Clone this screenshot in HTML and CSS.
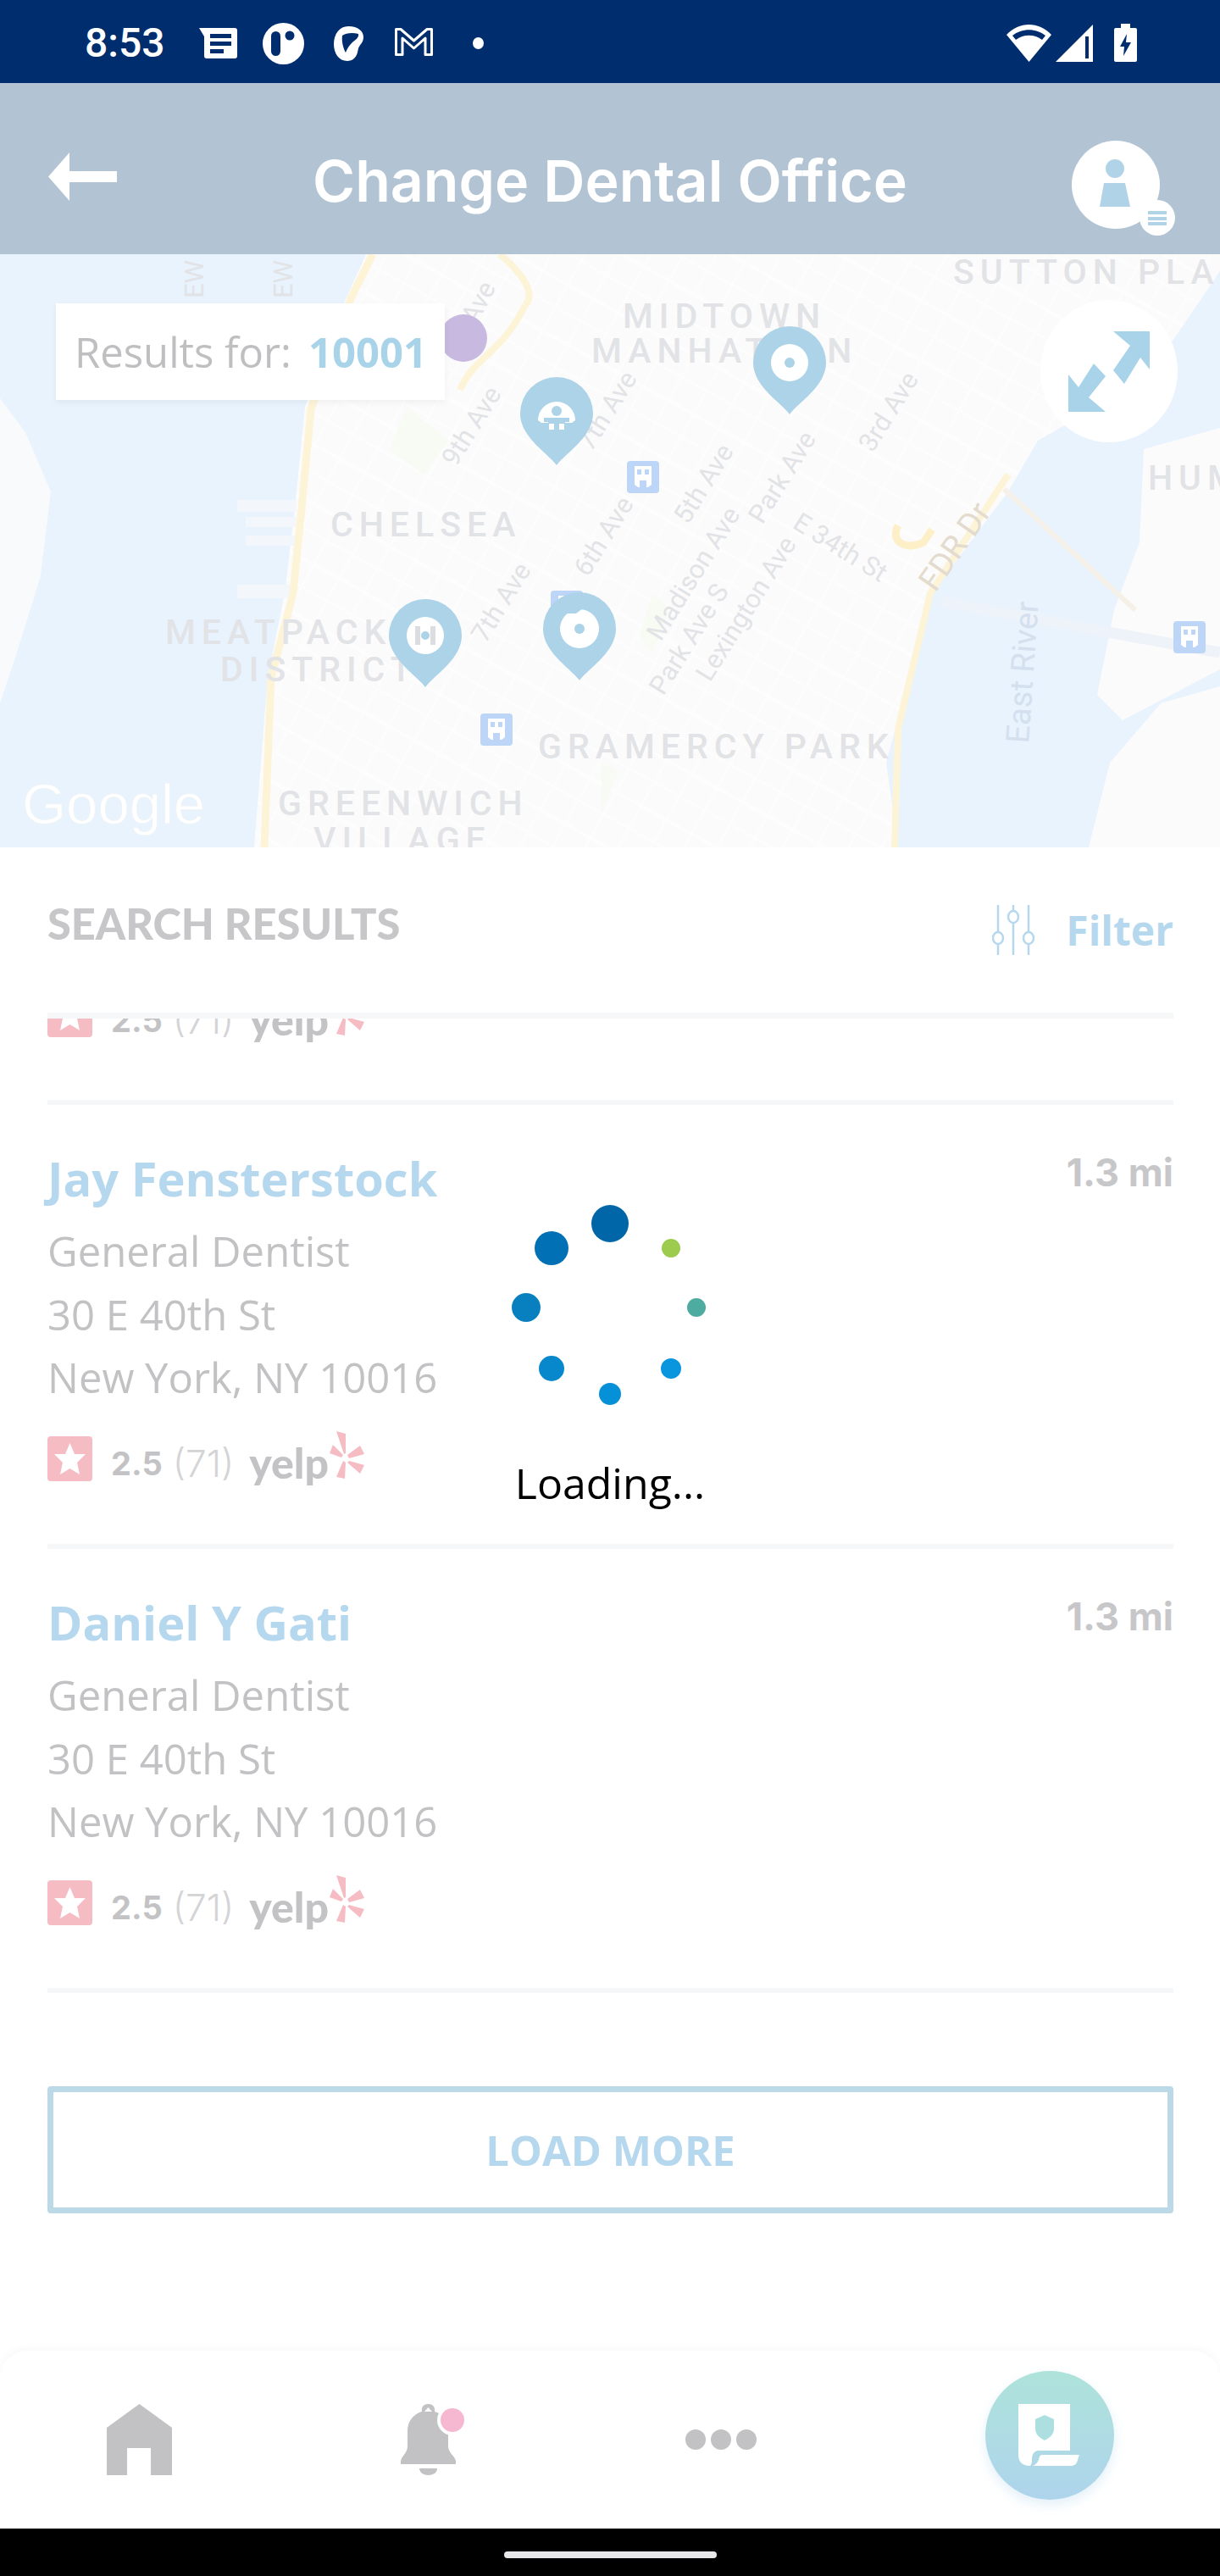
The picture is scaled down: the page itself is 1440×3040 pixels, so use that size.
FILE: index.html
```html
<!DOCTYPE html>
<html lang="en">
<head>
  <meta charset="UTF-8" />
  <meta name="viewport" content="width=device-width, initial-scale=1" />
  <title>Change Dental Office</title>
  <link rel="stylesheet" href="styles.css">
</head>
<body>

<div class="status-bar">
  <span class="clock">8:53</span>
  <svg class="st-msg" viewBox="0 0 45 36"><path fill="#fff" d="M0 0H42a3 3 0 0 1 3 3V33a3 3 0 0 1-3 3H9a3 3 0 0 1-3-3V10Z"/><path fill="#002d6e" d="M13 7H38V12H13ZM13 16H38V21H13ZM13 25H29V30H13Z"/></svg>
  <svg class="st-opal" viewBox="0 0 49 49"><circle cx="24.500" cy="24.500" r="24.500" fill="#fff"/><rect x="10" y="10" width="11" height="29" rx="5.500" fill="#002d6e"/><circle cx="32" cy="15" r="5.500" fill="#002d6e"/></svg>
  <svg class="st-leaf" viewBox="0 0 35 41"><path fill="#fff" d="M17 0C29 0 35 6 35 13C35 19 31 21 29 26C28 32 26 41 16 41C6 41 0 32 0 21C0 9 7 0 17 0Z"/><path fill="#002d6e" d="M10 11C14 8 22 7 29 9C30 14 25 16 21 20C18 23 16 26 14 31C11 26 9 17 10 11Z"/></svg>
  <svg class="st-gmail" viewBox="0 0 45 34"><path fill="none" stroke="#fff" stroke-width="3" stroke-linejoin="round" d="M1.500 2.500H7L22.500 16L38 2.500H43.500V32.500H36V13L22.500 25L9 13V32.500H1.500Z"/></svg>
  <span class="st-dot"></span>
  <span class="st-right">
    <svg class="st-wifi" viewBox="0 0 53 44"><path fill="#fff" d="M0 12C15-4 38-4 53 12L26.500 44Z"/><path fill="#002d6e" d="M7 13C18 4 35 4 46 13L42 18C33 11 20 11 11 18Z"/></svg>
    <svg class="st-signal" viewBox="0 0 44 44"><path fill="#fff" d="M44 0V44H0Z"/><path fill="#002d6e" d="M35 14H39V40H35Z"/></svg>
    <svg class="st-batt" viewBox="0 0 27 45"><path fill="#fff" d="M8 0H19V5H25a2 2 0 0 1 2 2V43a2 2 0 0 1-2 2H2a2 2 0 0 1-2-2V7a2 2 0 0 1 2-2H8Z"/><path fill="#002d6e" d="M15 12L7 27H12L11 38L20 22H14Z"/></svg>
  </span>
</div>

<header class="top-bar">
  <svg class="back" viewBox="0 0 81 57"><path fill="#fff" d="M25 0V22H81V35H25V57L0 28.500Z"/></svg>
  <h1 class="title">Change Dental Office</h1>
  <svg class="avatar" viewBox="0 0 123 112">
    <circle cx="53" cy="52" r="52" fill="#fff"/>
    <circle cx="52" cy="33" r="11" fill="#b1d3e8"/>
    <path fill="#b1d3e8" d="M39 50H64L70 78H34Z"/>
    <circle cx="102" cy="91" r="21" fill="#fff"/>
    <path fill="#b1d3e8" d="M91 83H113V87H91ZM91 90H113V94H91ZM91 96H113V100H91Z"/>
  </svg>
</header>

<section class="map">
  <svg class="map-svg" viewBox="0 300 1440 700">
    <defs>
      <pattern id="grid" width="62" height="34" patternUnits="userSpaceOnUse" patternTransform="rotate(-61)">
        <path d="M0 0H62M0 0V34M31 0V34" stroke="#fff" stroke-width="4" stroke-opacity=".6"/>
      </pattern>
      <path id="manhattan" d="M432 300L405 360L360 480L348 600L336 700L316 800L300 1000H1060L1046 900L1100 700L1190 580L1225 520L1355 445L1440 320V300Z"/>
      <path id="pin" d="M0 61C-10 47-43 28-43 0A43 43 0 0 1 43 0C43 28 10 47 0 61Z" fill="#add3e8"/>
      <g id="subway">
        <rect width="38" height="38" rx="4" fill="#bdd6f8"/>
        <path fill="#fff" d="M9 6H29V28L25 31H13L9 28Z"/>
        <path fill="#bdd6f8" d="M12 10H17V16H12ZM21 10H26V16H21ZM15 23H23V31H15Z"/>
      </g>
    </defs>
    <rect x="0" y="300" width="1440" height="700" fill="#e8f3fd"/>
    <path fill="#f8fafb" d="M0 470L30 510L60 580L48 680L20 770L0 830Z"/>
    <path fill="#fcfbfb" d="M1440 505L1350 530L1345 640L1315 720L1295 820L1325 850L1440 790Z"/>
    <path fill="#fcfbfb" d="M1440 810L1370 830L1310 900L1285 1000H1440Z"/>
    <use href="#manhattan" fill="#fcfbfb"/>
    <use href="#manhattan" fill="url(#grid)"/>
    <path fill="#f3f7fb" d="M280 590H350V604H280ZM290 610H350V622H290ZM290 632H350V644H290ZM280 690H345V706H280Z"/>
    <path fill="#f8fbf4" d="M480 480L530 520L500 560L460 530ZM770 700L790 720L770 770L755 750ZM710 900L730 910L710 960Z"/>
    <path d="M1111 710L1313 747L1440 770" stroke="#edf3f9" stroke-width="13" fill="none"/>
    <path d="M1185 577L1340 720" stroke="#f6f1e8" stroke-width="6" fill="none"/>
    <path d="M440 300L415 350L367 483L356 600L346 700L320 800L312 1000" stroke="#fdf4d8" stroke-width="9" fill="none"/>
    <path d="M620 360C590 420 560 420 543 460M590 300C625 330 630 350 620 360" stroke="#fdf4d8" stroke-width="8" fill="none"/>
    <path d="M1190 560L1098 700L1060 860L1056 1000" stroke="#fdf4d8" stroke-width="8" fill="none"/>
    <path d="M1060 620C1050 640 1070 650 1090 640L1100 625" stroke="#fdf0c8" stroke-width="9" fill="none"/>

    <g class="area">
      <text x="1125" y="335">SUTTON PLA</text>
      <text x="735" y="387">MIDTOWN</text>
      <text x="698" y="428">MANHATTAN</text>
      <text x="390" y="633">CHELSEA</text>
      <text x="195" y="760">MEATPACKING</text>
      <text x="260" y="804">DISTRICT</text>
      <text x="635" y="895">GRAMERCY PARK</text>
      <text x="328" y="962">GREENWICH</text>
      <text x="370" y="1005">VILLAGE</text>
      <text x="1355" y="578">HUM</text>
    </g>
    <g class="street">
      <text transform="translate(240 352) rotate(-90)">EW</text>
      <text transform="translate(345 352) rotate(-90)">EW</text>
      <text transform="translate(562 384) rotate(-62)">Ave</text>
      <text transform="translate(538 552) rotate(-58)">9th Ave</text>
      <text transform="translate(698 534) rotate(-58)">7th Ave</text>
      <text transform="translate(1030 535) rotate(-58)">3rd Ave</text>
      <text transform="translate(573 760) rotate(-58)">7th Ave</text>
      <text transform="translate(694 682) rotate(-58)">6th Ave</text>
      <text transform="translate(812 620) rotate(-58)">5th Ave</text>
      <text transform="translate(900 620) rotate(-58)">Park Ave</text>
      <text transform="translate(780 758) rotate(-58)">Madison Ave</text>
      <text transform="translate(783 822) rotate(-58)">Park Ave S</text>
      <text transform="translate(838 806) rotate(-58)">Lexington Ave</text>
      <text transform="translate(934 622) rotate(32)">E 34th St</text>
      <text class="fdr" transform="translate(1104 700) rotate(-55)">FDR Dr</text>
      <text class="river" transform="translate(1214 878) rotate(-86)">East River</text>
    </g>
    <text class="google" x="26" y="972">Google</text>

    <use href="#subway" x="740" y="544"/>
    <use href="#subway" x="567" y="842"/>
    <use href="#subway" x="1385" y="733"/>
    <use href="#subway" x="650" y="697"/>

    <circle cx="547" cy="399" r="28" fill="#c8b9e1"/>

    <g transform="translate(657 488)">
      <use href="#pin"/>
      <path fill="#fff" d="M-22 8A22 22 0 1 1 22 8L18 11H-18Z"/>
      <circle cx="0" cy="-3" r="6" fill="#add3e8"/>
      <path fill="#add3e8" d="M-15 5H15V10H10V22H-10V10H-15Z"/>
      <path fill="#fff" d="M-9 12H-3V19H-9ZM3 12H9V19H3Z"/>
    </g>
    <g transform="translate(502 750)">
      <use href="#pin"/>
      <circle r="22" fill="#fff"/>
      <path fill="#dcdde0" d="M-12-11H-6V11H-12ZM6-11H12V11H6Z"/>
      <circle r="5" fill="#add3e8"/>
    </g>
    <g transform="translate(684 742)">
      <use href="#pin"/>
      <circle r="23" fill="#fff"/>
      <circle r="6" fill="#add3e8"/>
      <path fill="#add3e8" d="M-14-22L-6-30H4V-24L-4-18H-14Z"/>
    </g>
    <g transform="translate(932 428)">
      <use href="#pin"/>
      <circle r="22" fill="#fff"/>
      <circle r="6" fill="#add3e8"/>
    </g>
  </svg>

  <div class="results-for">
    <span class="results-label">Results for:</span>
    <span class="results-zip">10001</span>
  </div>

  <button class="expand">
    <svg viewBox="0 0 96 95"><path fill="#a9d3e9" d="M53 0H96V45L85 31L66 62L53 46L73 17ZM0 51L12 66L30 38L44 53L24 78L44 95H0Z"/></svg>
  </button>
</section>

<div class="results-head">
  <div class="results-title">SEARCH RESULTS</div>
  <div class="filter">
    <svg class="filter-icon" viewBox="0 0 51 59" fill="none" stroke="#b6d8ee" stroke-width="2.500">
      <path d="M7 0V32M7 46V59M25 0V7M25 21V59M43 0V32M43 46V59"/>
      <ellipse cx="25" cy="14" rx="6" ry="7"/>
      <ellipse cx="7" cy="39" rx="6" ry="7"/>
      <ellipse cx="43" cy="39" rx="6" ry="7"/>
    </svg>
    <span>Filter</span>
  </div>
</div>

<main class="list">
  <div class="row row-cut">
    <div class="rating rating-cut">
      <svg class="star" viewBox="0 0 53 53"><rect width="53" height="53" rx="4" fill="#f6bcc4"/><path fill="#fff" d="M26.500 8L32 21H45L35 31L38 45L26.500 38L15 45L18 31L8 21H21Z"/></svg>
      <b>2.5</b><span class="count">(71)</span><span class="yelp">yelp</span>
      <svg class="burst" viewBox="0 0 42 56"><path fill="#f6bcc4" d="M8 0L19 3V26L17 27ZM21 28L36 17L41 27L23 32ZM23 35L41 40L36 50L21 37ZM19 37L18 56L8 54L16 35ZM14 31L0 26L4 16L16 28Z"/></svg>
    </div>
  </div>

  <div class="row">
    <div class="row-top">
      <div class="name">Jay Fensterstock</div>
      <div class="dist">1.3 mi</div>
    </div>
    <div class="info">General Dentist</div>
    <div class="info">30 E 40th St</div>
    <div class="info">New York, NY 10016</div>
    <div class="rating">
      <svg class="star" viewBox="0 0 53 53"><rect width="53" height="53" rx="4" fill="#f6bcc4"/><path fill="#fff" d="M26.500 8L32 21H45L35 31L38 45L26.500 38L15 45L18 31L8 21H21Z"/></svg>
      <b>2.5</b><span class="count">(71)</span><span class="yelp">yelp</span>
      <svg class="burst" viewBox="0 0 42 56"><path fill="#f6bcc4" d="M8 0L19 3V26L17 27ZM21 28L36 17L41 27L23 32ZM23 35L41 40L36 50L21 37ZM19 37L18 56L8 54L16 35ZM14 31L0 26L4 16L16 28Z"/></svg>
    </div>
  </div>

  <div class="row">
    <div class="row-top">
      <div class="name">Daniel Y Gati</div>
      <div class="dist">1.3 mi</div>
    </div>
    <div class="info">General Dentist</div>
    <div class="info">30 E 40th St</div>
    <div class="info">New York, NY 10016</div>
    <div class="rating">
      <svg class="star" viewBox="0 0 53 53"><rect width="53" height="53" rx="4" fill="#f6bcc4"/><path fill="#fff" d="M26.500 8L32 21H45L35 31L38 45L26.500 38L15 45L18 31L8 21H21Z"/></svg>
      <b>2.5</b><span class="count">(71)</span><span class="yelp">yelp</span>
      <svg class="burst" viewBox="0 0 42 56"><path fill="#f6bcc4" d="M8 0L19 3V26L17 27ZM21 28L36 17L41 27L23 32ZM23 35L41 40L36 50L21 37ZM19 37L18 56L8 54L16 35ZM14 31L0 26L4 16L16 28Z"/></svg>
    </div>
  </div>

  <button class="load-more">LOAD MORE</button>
</main>

<nav class="bottom-nav">
  <svg class="nav-home" viewBox="0 0 77 84"><path fill="#c2c2c4" d="M38.500 0L77 28V84H52V52H24V84H0V28Z"/></svg>
  <svg class="nav-bell" viewBox="0 0 65 84">
    <path fill="#c2c2c4" d="M32.500 0C38 0 41 4 40 9C50 12 56 20 56 32V50C56 58 65 62 65 68V71H0V68C0 62 8 58 8 50V32C8 20 15 12 25 9C24 4 27 0 32.500 0Z"/>
    <path fill="#fff" d="M32.500 4L37 9H28Z"/>
    <path fill="#c2c2c4" d="M22 76H43C43 81 38 84 32.500 84C27 84 22 81 22 76Z"/>
    <circle cx="61" cy="19" r="18" fill="#fff"/>
    <circle cx="61" cy="19" r="14" fill="#f6b8d0"/>
  </svg>
  <div class="nav-dots"><span></span><span></span><span></span></div>
  <div class="fab">
    <svg viewBox="0 0 72 74">
      <path fill="#fff" d="M0 0H61V55H24C18 55 16 60 16 66C16 70 15 73 13 73C5 73 0 68 0 60Z"/>
      <path fill="#fff" d="M27 60H72L70 66C69 71 66 73 62 73H17C22 71 24 67 25 62Z"/>
      <path fill="#aedfe0" d="M31 13L42 18V29C42 36 37 40 31 43C25 40 20 36 20 29V18Z"/>
    </svg>
  </div>
</nav>

<div class="android-nav"><span class="home-pill"></span></div>

<div class="loader">
  <svg class="spinner" viewBox="600 1420 240 240">
    <circle cx="720" cy="1444" r="22" fill="#0066a8"/>
    <circle cx="651" cy="1473" r="20" fill="#0170b5"/>
    <circle cx="621" cy="1543" r="17" fill="#0880c0"/>
    <circle cx="651" cy="1615" r="15" fill="#0888cc"/>
    <circle cx="720" cy="1645" r="13" fill="#0690d8"/>
    <circle cx="792" cy="1615" r="12" fill="#0a96de"/>
    <circle cx="822" cy="1543" r="11" fill="#4dac9f"/>
    <circle cx="792" cy="1473" r="11" fill="#9dcb4e"/>
  </svg>
  <div class="loader-text">Loading...</div>
</div>

</body>
</html>
```

FILE: styles.css
```css
body {
  margin: 0;
  width: 1440px;
  height: 3040px;
  overflow: hidden;
  position: relative;
  background: #fff;
  font-family: 'Open Sans', sans-serif;
}

/* android status bar */
.status-bar {
  height: 98px;
  background: #002d6e;
  display: flex;
  align-items: center;
  padding-left: 100px;
  color: #fff;
  box-sizing: border-box;
}
.clock {
  font-family: Roboto, sans-serif;
  font-size: 48px;
  font-weight: 500;
  line-height: 98px;
  width: 92px;
  margin-right: 43px;
  margin-top: 4px;
}
.status-bar svg { display: block; flex: none; }
.st-msg { width: 45px; height: 36px; margin-top: 4px; margin-right: 30px; }
.st-opal { width: 49px; height: 49px; margin-top: 5px; margin-right: 35px; }
.st-leaf { width: 35px; height: 41px; margin-top: 5px; margin-right: 37px; }
.st-gmail { width: 45px; height: 34px; margin-right: 47px; }
.st-dot { width: 13px; height: 14px; border-radius: 50%; background: #fff; margin-top: 4px; }
.st-right { margin-left: auto; margin-right: 98px; display: flex; align-items: center; margin-top: 3px; }
.st-wifi { width: 53px; height: 44px; margin-right: 5px; }
.st-signal { width: 44px; height: 44px; margin-right: 25px; }
.st-batt { width: 27px; height: 45px; }

/* title bar */
.top-bar {
  height: 202px;
  background: #b2c4d4;
  display: grid;
  grid-template-columns: 1fr auto 1fr;
  align-items: center;
}
.back { width: 81px; height: 57px; margin-left: 57px; margin-top: 18px; }
.title {
  margin: 28px 0 0;
  font-family: Inter, sans-serif;
  font-size: 68px;
  font-weight: 600;
  color: #fff;
  white-space: nowrap;
}
.avatar { width: 123px; height: 112px; justify-self: end; margin-right: 53px; margin-top: 46px; }

/* map */
.map {
  height: 700px;
  position: relative;
  overflow: hidden;
}
.map-svg { display: block; width: 1440px; height: 700px; }
.area text {
  font-family: Roboto, sans-serif;
  font-size: 41px;
  font-weight: 500;
  letter-spacing: 7px;
  fill: #e2e3e6;
}
.street text {
  font-family: Roboto, sans-serif;
  font-size: 31px;
  fill: #e2e3e6;
}
.street .fdr { fill: #e3dbce; font-size: 38px; }
.street .river { fill: #d4e0ee; font-size: 38px; }
.google {
  font-family: 'Liberation Sans', sans-serif;
  font-size: 67px;
  font-weight: 400;
  fill: #fff;
  stroke: #eef3f7;
  stroke-width: 1px;
}
.results-for {
  position: absolute;
  left: 66px;
  top: 58px;
  width: 459px;
  height: 114px;
  background: #fff;
  box-shadow: 0 3px 8px rgba(0, 0, 0, 0.05);
  display: flex;
  align-items: center;
  padding-left: 22px;
  box-sizing: border-box;
  gap: 20px;
  font-size: 49px;
}
.results-label { color: #bfbfc1; }
.results-zip { color: #a8d3e8; font-weight: 700; }
.expand {
  position: absolute;
  left: 1228px;
  top: 54px;
  width: 162px;
  height: 168px;
  border: none;
  border-radius: 50%;
  background: #fff;
  padding: 0;
  display: flex;
  align-items: center;
  justify-content: center;
}
.expand svg { width: 96px; height: 95px; }

/* search results header */
.results-head {
  height: 195px;
  margin: 0 55px 0 56px;
  display: flex;
  justify-content: space-between;
  align-items: flex-start;
}
.results-title {
  font-family: Lato, sans-serif;
  font-size: 50.500px;
  font-weight: 900;
  color: #c7c7c9;
  line-height: 58px;
  margin-top: 61px;
}
.filter {
  display: flex;
  align-items: center;
  gap: 36px;
  margin-top: 68px;
  font-size: 48px;
  font-weight: 700;
  color: #b6d8ee;
  line-height: 59px;
}
.filter-icon { width: 51px; height: 59px; }

/* scrolled list */
.list {
  height: 1579px;
  overflow: hidden;
  padding: 0 55px 0 56px;
  box-sizing: border-box;
}
.row {
  height: 524px;
  padding-top: 56px;
  box-sizing: border-box;
  border-bottom: 6px solid #f6f7f9;
}
.row-cut {
  height: 109px;
  padding-top: 0;
  border-top: 7px solid #f6f7f9;
  overflow: hidden;
}
.row-top {
  display: flex;
  justify-content: space-between;
  align-items: flex-start;
}
.name {
  font-size: 56px;
  font-weight: 700;
  line-height: 60px;
  color: #b6d8ee;
}
.dist {
  font-family: Inter, sans-serif;
  font-size: 45px;
  font-weight: 700;
  line-height: 48px;
  color: #c7c7c9;
}
.info {
  font-size: 49px;
  line-height: 74.500px;
  color: #c2c2c4;
}
.row-top + .info { margin-top: 19px; }
.rating {
  display: flex;
  align-items: center;
  margin-top: 32px;
  height: 53px;
  font-family: Inter, sans-serif;
  font-size: 38px;
  color: #c3c3c6;
}
.rating-cut { margin-top: -31px; }
.star { width: 53px; height: 53px; margin-right: 22px; flex: none; }
.rating b { font-weight: 700; margin-right: 12px; margin-top: 12px; }
.count { color: #d4d4d6; font-weight: 300; font-size: 44px; margin-right: 18px; margin-top: 12px; }
.yelp { font-family: Lato, sans-serif; font-weight: 900; font-size: 50px; margin-top: 10px; }
.burst { width: 42px; height: 56px; margin-left: 1px; margin-top: -8px; flex: none; }
.load-more {
  display: block;
  width: 100%;
  height: 150px;
  margin-top: 110px;
  background: #fff;
  border: 7px solid #bcd9e8;
  border-radius: 4px;
  font-family: 'Open Sans', sans-serif;
  font-size: 49px;
  font-weight: 700;
  color: #b6d8ee;
}

/* bottom nav */
.bottom-nav {
  height: 210px;
  border-radius: 32px 32px 0 0;
  background: #fff;
  box-shadow: 0 -3px 10px rgba(0, 0, 0, 0.03);
  display: flex;
  align-items: center;
  gap: 270px;
  padding-left: 126px;
  box-sizing: border-box;
  position: relative;
}
.nav-home { width: 77px; height: 84px; }
.nav-bell { width: 65px; height: 84px; overflow: visible; }
.nav-dots { display: flex; gap: 6px; width: 84px; margin-left: 1px; }
.nav-dots span { width: 24px; height: 24px; border-radius: 50%; background: #c2c2c4; }
.fab {
  width: 152px;
  height: 152px;
  border-radius: 50%;
  margin-top: -11px;
  background: linear-gradient(180deg, #aee3da 0%, #aed4ec 100%);
  box-shadow: 0 6px 14px rgba(174, 212, 236, 0.35);
  display: flex;
  align-items: center;
  justify-content: center;
}
.fab svg { width: 72px; height: 74px; margin-left: -3px; }

.android-nav {
  height: 56px;
  background: #000;
  display: flex;
  justify-content: center;
  padding-top: 27px;
  box-sizing: border-box;
}
.home-pill { width: 251px; height: 8px; border-radius: 4px; background: #e8e8ea; }

/* loading overlay */
.loader {
  position: absolute;
  left: 0;
  right: 0;
  top: 1420px;
  display: flex;
  flex-direction: column;
  align-items: center;
}
.spinner { width: 240px; height: 240px; display: block; }
.loader-text {
  font-size: 50px;
  line-height: 64px;
  color: #000;
  margin-top: 58px;
}
```
